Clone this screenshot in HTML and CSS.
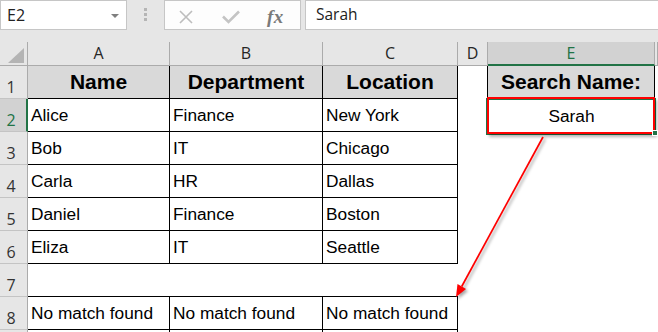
FILE: index.html
```html
<!DOCTYPE html>
<html lang="en">
    <head>
        <meta charset="utf-8">
        <title>Search Name</title>
        <link rel="stylesheet" href="styles.css">
    </head>
    <body>
        <div class="excel">
            <!-- formula bar -->
            <div class="formula-bar">
                <div class="name-box">
                    <span>E2</span>
                    <span class="caret"></span>
                </div>
                <div class="grip"><i></i><i></i><i></i></div>
                <div class="fx-buttons">
                    <svg class="ic-x" width="14" height="14" viewBox="0 0 14 14">
                        <path d="M1 1 L13 13 M13 1 L1 13" stroke="#bdbdbd" stroke-width="1.6" fill="none"/>
                    </svg>
                    <svg class="ic-ok" width="18" height="14" viewBox="0 0 18 14">
                        <path d="M1 6.5 L6.5 12 L17 1.5" stroke="#c4c4c4" stroke-width="2.6" fill="none"/>
                    </svg>
                    <span class="fx">fx</span>
                </div>
                <div class="formula-input">Sarah</div>
            </div>

            <!-- sheet -->
            <div class="sheet">
                <div class="corner"><span class="corner-tri"></span></div>
                <div class="col-head">A</div>
                <div class="col-head">B</div>
                <div class="col-head">C</div>
                <div class="col-head">D</div>
                <div class="col-head active">E</div>
                <div class="col-head"></div>

                <div class="row-head">1</div>
                <div class="cell bx th">Name</div>
                <div class="cell bx th">Department</div>
                <div class="cell bx th">Location</div>
                <div class="cell edge-r"></div>
                <div class="cell bx th">Search Name:</div>
                <div class="cell"></div>

                <div class="row-head active">2</div>
                <div class="cell bx">Alice</div>
                <div class="cell bx">Finance</div>
                <div class="cell bx">New York</div>
                <div class="cell"></div>
                <div class="cell center picked">Sarah<span class="sel"></span><span class="mark"></span><span class="handle"></span></div>
                <div class="cell"></div>

                <div class="row-head">3</div>
                <div class="cell bx">Bob</div>
                <div class="cell bx">IT</div>
                <div class="cell bx">Chicago</div>
                <div class="cell"></div>
                <div class="cell"></div>
                <div class="cell"></div>

                <div class="row-head">4</div>
                <div class="cell bx">Carla</div>
                <div class="cell bx">HR</div>
                <div class="cell bx">Dallas</div>
                <div class="cell"></div>
                <div class="cell"></div>
                <div class="cell"></div>

                <div class="row-head">5</div>
                <div class="cell bx">Daniel</div>
                <div class="cell bx">Finance</div>
                <div class="cell bx">Boston</div>
                <div class="cell"></div>
                <div class="cell"></div>
                <div class="cell"></div>

                <div class="row-head">6</div>
                <div class="cell bx">Eliza</div>
                <div class="cell bx">IT</div>
                <div class="cell bx">Seattle</div>
                <div class="cell"></div>
                <div class="cell"></div>
                <div class="cell"></div>

                <div class="row-head">7</div>
                <div class="cell bb"></div>
                <div class="cell bb"></div>
                <div class="cell bb"></div>
                <div class="cell"></div>
                <div class="cell"></div>
                <div class="cell"></div>

                <div class="row-head">8</div>
                <div class="cell bx">No match found</div>
                <div class="cell bx">No match found</div>
                <div class="cell bx">No match found</div>
                <div class="cell"></div>
                <div class="cell"></div>
                <div class="cell"></div>

                <!-- row 9, only its top edge shows -->
                <div class="row-head"></div>
                <div class="cell bx"></div>
                <div class="cell bx"></div>
                <div class="cell bx"></div>
                <div class="cell"></div>
                <div class="cell"></div>
                <div class="cell"></div>
            </div>

            <!-- annotation arrow -->
            <svg class="arrow" width="658" height="332" viewBox="0 0 658 332">
                <g class="arrow-shape">
                    <line x1="543" y1="137" x2="461.7" y2="286.5" stroke="#ff0000" stroke-width="1.7"/>
                    <polygon points="456,297 466,289 457.5,284" fill="#ff0000"/>
                </g>
            </svg>
        </div>
    </body>
</html>
```

FILE: styles.css
```css
html, body {
    margin: 0;
    padding: 0;
}
body {
    background: #fff;
    font-family: "Liberation Sans", Arial, sans-serif;
    color: #000;
}
.excel {
    position: relative;
    width: 658px;
    height: 332px;
    overflow: hidden;
}

/* formula bar */
.formula-bar {
    height: 42px;
    background: #e6e6e6;
    display: flex;
    align-items: flex-start;
}
.name-box {
    box-sizing: border-box;
    width: 127px;
    height: 30px;
    background: #fff;
    border: 1px solid #c6c6c6;
    display: flex;
    align-items: center;
    justify-content: space-between;
    padding: 0 7px 0 6px;
    font-family: "Open Sans", sans-serif;
    font-size: 16px;
    color: #222;
}
.caret {
    width: 0;
    height: 0;
    border-left: 4px solid transparent;
    border-right: 4px solid transparent;
    border-top: 4px solid #7f7f7f;
    margin-top: 2px;
}
.grip {
    margin: 8px 0 0 17px;
    display: flex;
    flex-direction: column;
    gap: 2px;
}
.grip i {
    display: block;
    width: 3px;
    height: 3px;
    background: #b5b5b5;
}
.fx-buttons {
    box-sizing: border-box;
    width: 137px;
    height: 30px;
    margin-left: 17px;
    background: #fdfdfd;
    border: 1px solid #c6c6c6;
    display: flex;
    align-items: center;
    padding: 3px 0 0 14px;
}
.ic-ok {
    margin-left: 29px;
}
.fx {
    margin-left: 27px;
    font-family: "Liberation Serif", serif;
    font-style: italic;
    font-weight: bold;
    font-size: 19px;
    color: #7a7a7a;
    letter-spacing: 0.5px;
}
.formula-input {
    box-sizing: border-box;
    flex: 1;
    height: 30px;
    margin-left: 4px;
    background: #fff;
    border: 1px solid #c6c6c6;
    border-right: none;
    padding-left: 10px;
    font-family: "Open Sans", sans-serif;
    font-size: 15.5px;
    line-height: 27px;
    color: #222;
}

/* sheet grid */
.sheet {
    display: grid;
    grid-template-columns: 28px 142px 153px 135px 30px 167px 1fr;
    grid-template-rows: 24px repeat(9, 33px);
}
.corner, .col-head, .row-head, .cell {
    box-sizing: border-box;
    overflow: hidden;
    white-space: nowrap;
}
.corner {
    background: #e6e6e6;
    border-right: 1px solid #ababab;
    border-bottom: 1px solid #ababab;
    display: flex;
    justify-content: flex-end;
    align-items: flex-end;
    padding: 0 3px 2px 0;
}
.corner-tri {
    width: 0;
    height: 0;
    border-left: 16px solid transparent;
    border-bottom: 15px solid #b4b4b4;
}
.col-head {
    background: #e6e6e6;
    border-right: 1px solid #ababab;
    border-bottom: 1px solid #ababab;
    text-align: center;
    font-family: "Open Sans", sans-serif;
    font-size: 16px;
    line-height: 23px;
    color: #262626;
}
.col-head.active {
    background: #d2d2d2;
    color: #217346;
    border-bottom: 2px solid #217346;
}
.row-head {
    background: #e6e6e6;
    border-right: 1px solid #ababab;
    border-bottom: 1px solid #c4c4c4;
    display: flex;
    align-items: flex-end;
    justify-content: center;
    padding-right: 5px;
    font-family: "Open Sans", sans-serif;
    font-size: 16px;
    line-height: 21px;
    color: #333;
}
.row-head.active {
    background: #d2d2d2;
    color: #217346;
    border-right: 2px solid #217346;
    padding-right: 4px;
}

.cell {
    display: flex;
    align-items: flex-end;
    padding: 0 0 5px 3px;
    font-size: 17.3px;
}
.bx {
    border-right: 1px solid #000;
    border-bottom: 1px solid #000;
}
.bb {
    border-bottom: 1px solid #000;
}
.edge-r {
    border-right: 1px solid #000;
}
.th {
    background: #d9d9d9;
    justify-content: center;
    font-weight: bold;
    font-size: 21px;
    padding: 0 0 4px 0;
}
.center {
    justify-content: center;
    padding-left: 0;
}

/* selected cell E2 with red mark */
.picked {
    position: relative;
    overflow: visible;
}
.sel {
    position: absolute;
    left: -2px;
    top: -1px;
    right: -1px;
    bottom: -3px;
    border: 2px solid #217346;
}
.mark {
    position: absolute;
    left: -1px;
    top: -2px;
    right: 0;
    bottom: -2px;
    border: 2px solid #ff0000;
    box-shadow: 2px 3px 3px rgba(0, 0, 0, 0.3);
}
.handle {
    position: absolute;
    right: -3px;
    bottom: -4px;
    width: 4px;
    height: 4px;
    background: #217346;
    border: 1px solid #fff;
}

/* arrow overlay */
.arrow {
    position: absolute;
    left: 0;
    top: 0;
    pointer-events: none;
}
.arrow-shape {
    filter: drop-shadow(2px 2px 1.5px rgba(0, 0, 0, 0.35));
}
```
